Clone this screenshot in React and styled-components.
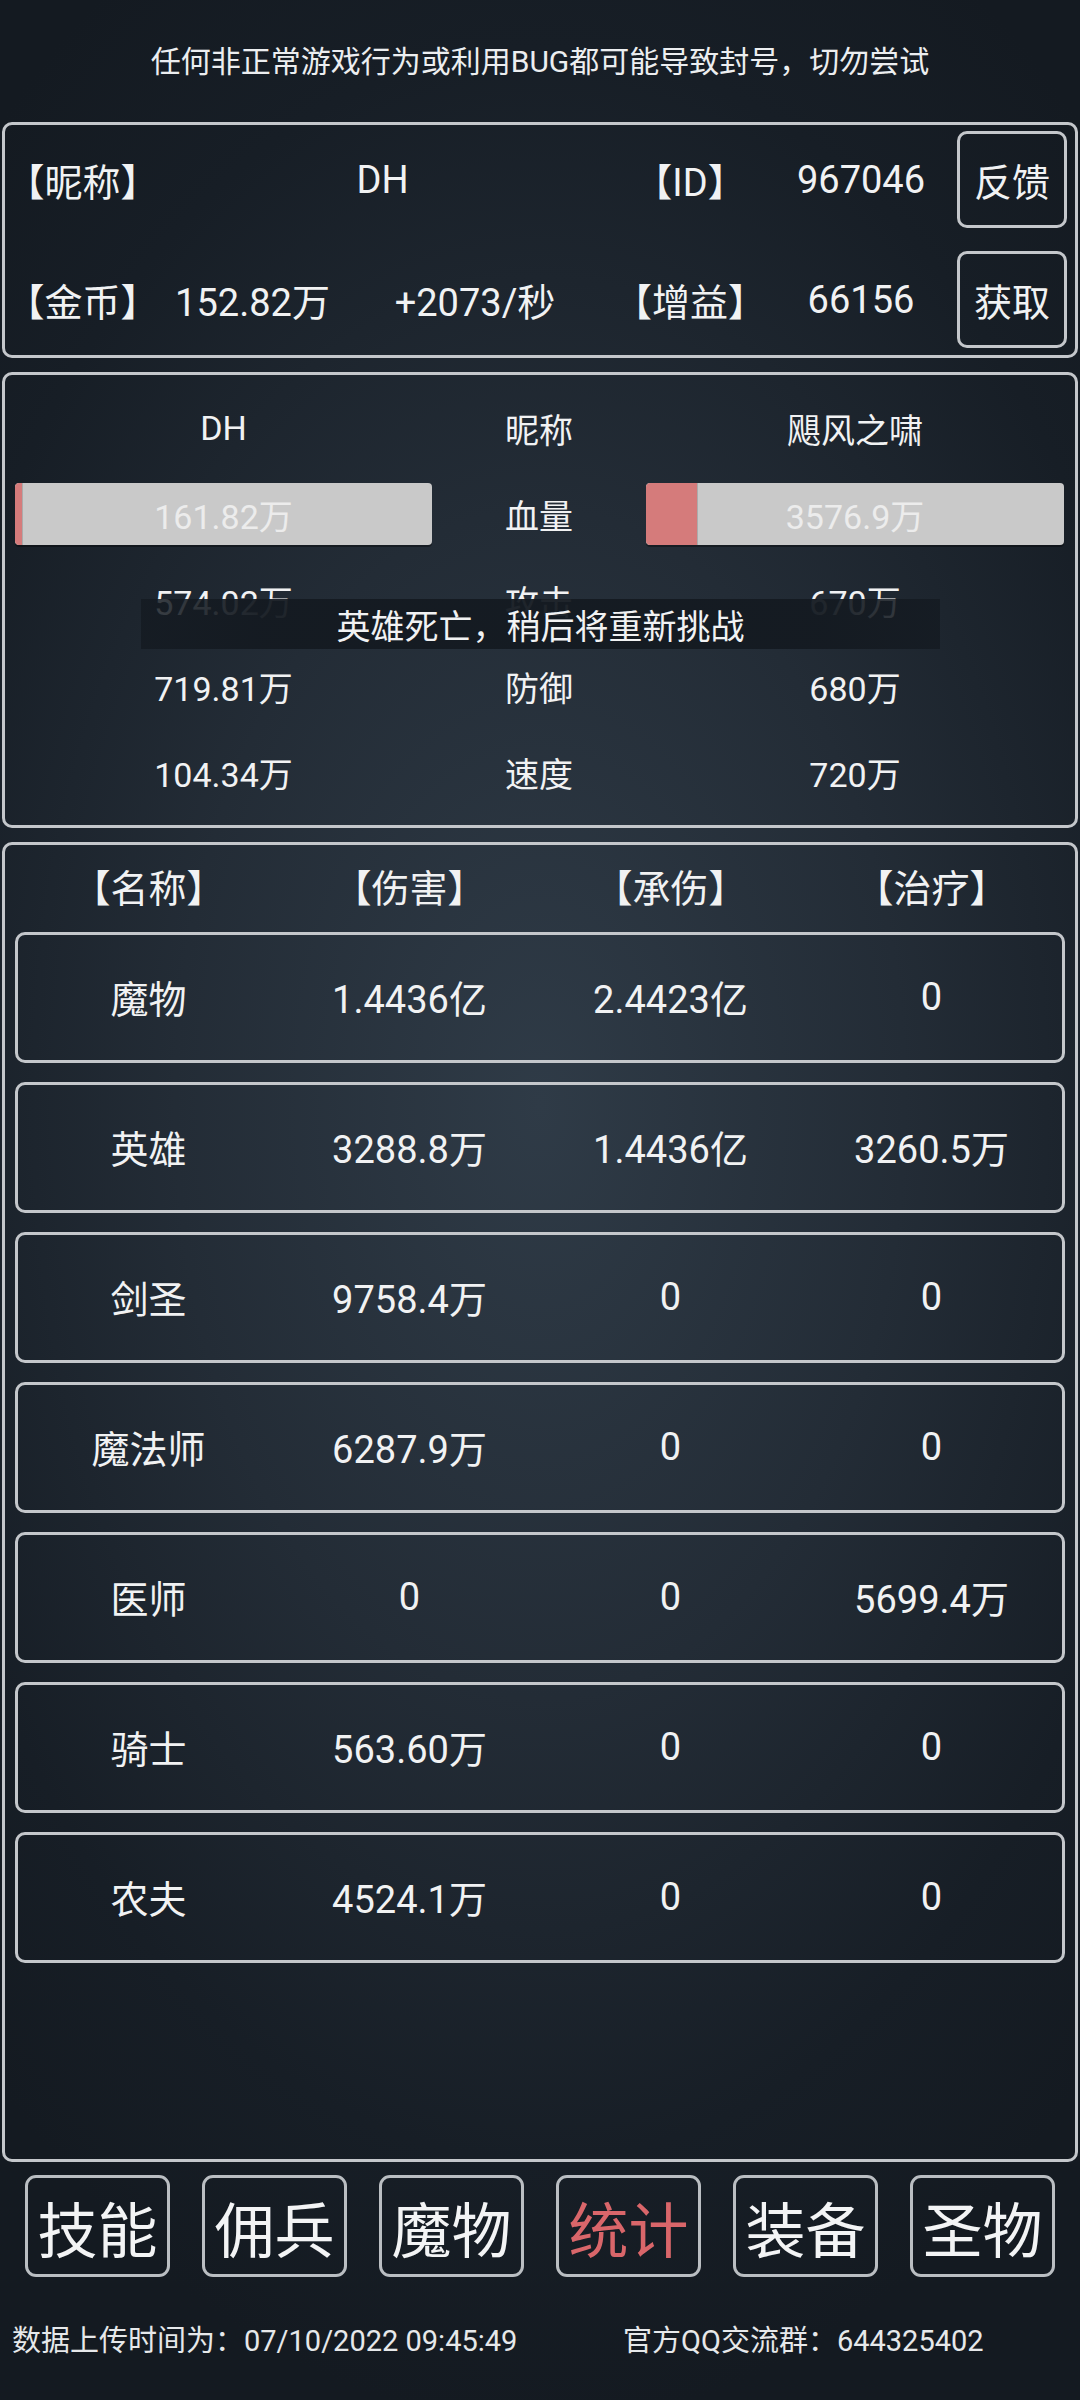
import React from "react";
import styled, { createGlobalStyle } from "styled-components";

const GlobalStyle = createGlobalStyle`
  html, body {
    margin: 0;
    padding: 0;
    background: #161c23;
  }
  * {
    box-sizing: border-box;
  }
`;

const Screen = styled.div`
  width: 1080px;
  height: 2400px;
  overflow: hidden;
  font-family: Roboto, "Noto Sans CJK SC", sans-serif;
  color: #f1f2f3;
  background: radial-gradient(
    ellipse 75% 55% at 50% 46%,
    #2f3b47 0%,
    #232c36 45%,
    #171e26 80%,
    #141a21 100%
  );
  display: flex;
  flex-direction: column;
`;

const Notice = styled.div`
  height: 118px;
  display: flex;
  align-items: center;
  justify-content: center;
  font-size: 30px;
  color: #eceef0;
`;

const Panel = styled.div`
  margin: 0 2px;
  border: 3px solid #c4c7cb;
  border-radius: 10px;
`;

const InfoPanel = styled(Panel)`
  margin-top: 4px;
  height: 236px;
  padding: 6px 8px 7px 0;
  display: grid;
  grid-template-columns: 155px 185px 260px 170px 172px 1fr;
  grid-template-rows: 97px 97px;
  row-gap: 23px;
  align-items: center;
  font-size: 38px;
`;

const InfoCell = styled.div`
  text-align: center;
  white-space: nowrap;
  grid-column: ${(p) => (p.$span ? `span ${p.$span}` : "auto")};
`;

const SideButton = styled.div`
  justify-self: end;
  width: 110px;
  height: 97px;
  border: 3px solid #c4c7cb;
  border-radius: 10px;
  display: flex;
  align-items: center;
  justify-content: center;
  font-size: 38px;
`;

const BattlePanel = styled(Panel)`
  position: relative;
  margin-top: 14px;
  height: 456px;
  padding: 10px 11px 0 10px;
  font-size: 34px;
`;

const BattleRow = styled.div`
  height: 86px;
  display: grid;
  grid-template-columns: 417px 1fr 418px;
  align-items: center;
  text-align: center;
`;

const HpBar = styled.div`
  position: relative;
  height: 62px;
  background: #c9c9c9;
  border-radius: 4px;
  box-shadow: 0 2px 0 rgba(0, 0, 0, 0.35);
  overflow: hidden;
  display: flex;
  align-items: center;
  justify-content: center;
`;

const HpFill = styled.div`
  position: absolute;
  left: 0;
  top: 0;
  bottom: 0;
  background: #d57b7b;
  border-radius: 4px 0 0 4px;
  box-shadow: 1px 0 0 rgba(0, 0, 0, 0.15);
`;

const HpText = styled.span`
  position: relative;
  color: #ececec;
`;

const DeathToast = styled.div`
  position: absolute;
  left: 136px;
  top: 224px;
  width: 799px;
  height: 50px;
  display: flex;
  align-items: center;
  justify-content: center;
  font-size: 34px;
  color: #f1f2f3;
  background: linear-gradient(
    90deg,
    rgba(20, 26, 33, 0.82) 0%,
    rgba(20, 26, 33, 0.95) 15%,
    rgba(20, 26, 33, 0.95) 85%,
    rgba(20, 26, 33, 0.82) 100%
  );
`;

const StatsPanel = styled(Panel)`
  margin-top: 14px;
  height: 1320px;
  padding: 0 10px;
  font-size: 38px;
`;

const StatsHeader = styled.div`
  height: 87px;
  padding: 0 3px 6px;
  display: grid;
  grid-template-columns: repeat(4, 1fr);
  align-items: center;
  text-align: center;
`;

const StatsList = styled.div`
  display: flex;
  flex-direction: column;
  gap: 19px;
`;

const StatsRow = styled.div`
  height: 131px;
  border: 3px solid #c4c7cb;
  border-radius: 10px;
  padding-bottom: 2px;
  display: grid;
  grid-template-columns: repeat(4, 1fr);
  align-items: center;
  text-align: center;
`;

const NavBar = styled.div`
  margin-top: 13px;
  padding: 0 25px;
  display: grid;
  grid-template-columns: repeat(6, 145px);
  column-gap: 32px;
`;

const NavButton = styled.div`
  height: 102px;
  border: 3px solid #babec2;
  border-radius: 11px;
  display: flex;
  align-items: center;
  justify-content: center;
  font-size: 60px;
  color: ${(p) => (p.$active ? "#d9666a" : "#f3f4f5")};
`;

const Footer = styled.div`
  margin-top: 40px;
  height: 36px;
  padding-left: 12px;
  display: grid;
  grid-template-columns: 611px auto;
  align-items: center;
  font-size: 29px;
  color: #e6e8ea;
  white-space: nowrap;
`;

const battle = [
  { left: "574.02万", label: "攻击", right: "670万" },
  { left: "719.81万", label: "防御", right: "680万" },
  { left: "104.34万", label: "速度", right: "720万" },
];

const stats = [
  ["魔物", "1.4436亿", "2.4423亿", "0"],
  ["英雄", "3288.8万", "1.4436亿", "3260.5万"],
  ["剑圣", "9758.4万", "0", "0"],
  ["魔法师", "6287.9万", "0", "0"],
  ["医师", "0", "0", "5699.4万"],
  ["骑士", "563.60万", "0", "0"],
  ["农夫", "4524.1万", "0", "0"],
];

const tabs = ["技能", "佣兵", "魔物", "统计", "装备", "圣物"];

export default function App() {
  const heroHp = 1.7;
  const bossHp = 12.2;

  return (
    <Screen>
      <GlobalStyle />
      <Notice>任何非正常游戏行为或利用BUG都可能导致封号，切勿尝试</Notice>

      <InfoPanel>
        <InfoCell>【昵称】</InfoCell>
        <InfoCell $span={2}>DH</InfoCell>
        <InfoCell>【ID】</InfoCell>
        <InfoCell>967046</InfoCell>
        <SideButton>反馈</SideButton>
        <InfoCell>【金币】</InfoCell>
        <InfoCell>152.82万</InfoCell>
        <InfoCell>+2073/秒</InfoCell>
        <InfoCell>【增益】</InfoCell>
        <InfoCell>66156</InfoCell>
        <SideButton>获取</SideButton>
      </InfoPanel>

      <BattlePanel>
        <BattleRow>
          <div>DH</div>
          <div>昵称</div>
          <div>飓风之啸</div>
        </BattleRow>
        <BattleRow>
          <HpBar>
            <HpFill style={{ width: `${heroHp}%` }} />
            <HpText>161.82万</HpText>
          </HpBar>
          <div>血量</div>
          <HpBar>
            <HpFill style={{ width: `${bossHp}%` }} />
            <HpText>3576.9万</HpText>
          </HpBar>
        </BattleRow>
        {battle.map((b) => (
          <BattleRow key={b.label}>
            <div>{b.left}</div>
            <div>{b.label}</div>
            <div>{b.right}</div>
          </BattleRow>
        ))}
        <DeathToast>英雄死亡，稍后将重新挑战</DeathToast>
      </BattlePanel>

      <StatsPanel>
        <StatsHeader>
          <div>【名称】</div>
          <div>【伤害】</div>
          <div>【承伤】</div>
          <div>【治疗】</div>
        </StatsHeader>
        <StatsList>
          {stats.map((row) => (
            <StatsRow key={row[0]}>
              {row.map((v, i) => (
                <div key={i}>{v}</div>
              ))}
            </StatsRow>
          ))}
        </StatsList>
      </StatsPanel>

      <NavBar>
        {tabs.map((t) => (
          <NavButton key={t} $active={t === "统计"}>
            {t}
          </NavButton>
        ))}
      </NavBar>

      <Footer>
        <span>数据上传时间为：07/10/2022 09:45:49</span>
        <span>官方QQ交流群：644325402</span>
      </Footer>
    </Screen>
  );
}
